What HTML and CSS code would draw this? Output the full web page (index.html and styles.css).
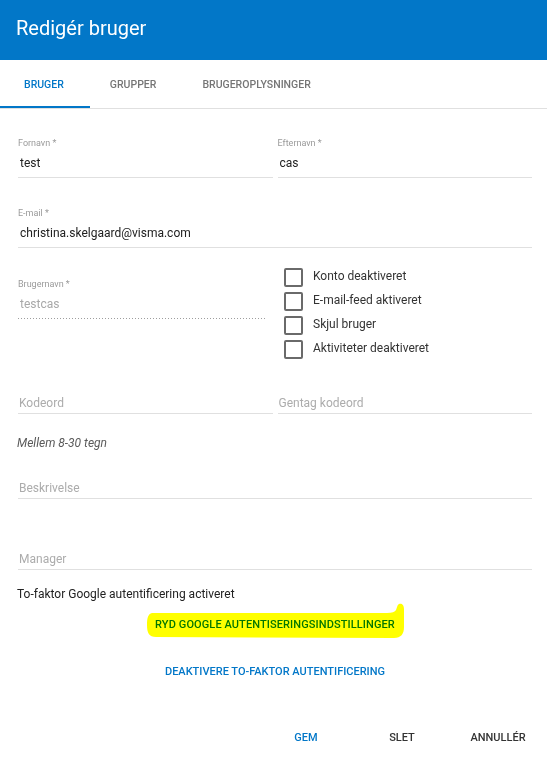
FILE: index.html
```html
<!DOCTYPE html>
<html lang="da">
<head>
<meta charset="utf-8">
<title>Redigér bruger</title>
<link rel="stylesheet" href="styles.css">
</head>
<body>
<div class="dialog">
  <div class="title-bar">Redigér bruger</div>
  <div class="tabs">
    <div class="tab active">BRUGER</div>
    <div class="tab">GRUPPER</div>
    <div class="tab">BRUGEROPLYSNINGER</div>
  </div>
  <div class="form">
    <div class="row row-name">
      <div class="field">
        <div class="field-label">Fornavn *</div>
        <div class="field-value">test</div>
      </div>
      <div class="field">
        <div class="field-label">Efternavn *</div>
        <div class="field-value">cas</div>
      </div>
    </div>
    <div class="row row-email">
      <div class="field">
        <div class="field-label">E-mail *</div>
        <div class="field-value">christina.skelgaard@visma.com</div>
      </div>
    </div>
    <div class="row row-user">
      <div class="col-left">
        <div class="field field-disabled">
          <div class="field-label">Brugernavn *</div>
          <div class="field-value muted">testcas</div>
        </div>
      </div>
      <div class="col-right">
        <div class="check"><span class="box"></span><span class="check-label">Konto deaktiveret</span></div>
        <div class="check"><span class="box"></span><span class="check-label">E-mail-feed aktiveret</span></div>
        <div class="check"><span class="box"></span><span class="check-label">Skjul bruger</span></div>
        <div class="check"><span class="box"></span><span class="check-label">Aktiviteter deaktiveret</span></div>
      </div>
    </div>
    <div class="row row-pass">
      <div class="field plain"><div class="placeholder">Kodeord</div></div>
      <div class="field plain"><div class="placeholder">Gentag kodeord</div></div>
    </div>
    <div class="hint">Mellem 8-30 tegn</div>
    <div class="row row-desc">
      <div class="field plain"><div class="placeholder">Beskrivelse</div></div>
    </div>
    <div class="row row-manager">
      <div class="field plain"><div class="placeholder">Manager</div></div>
    </div>
    <div class="twofa">To-faktor Google autentificering activeret</div>
    <div class="center-row row-clear">
      <span class="link-btn highlighted">RYD GOOGLE AUTENTISERINGSINDSTILLINGER
        <svg class="marker" width="258" height="36" viewBox="0 0 258 36" aria-hidden="true">
          <path d="M5 10 C1 11 0 15 0 22 C0 30 2 34 9 34 L247 35 C254 35 257 31 257 24 L257 6 C257 1 254 0 252 1 C250 2 250 5 249 7 C248 9 245 10 240 10 Z" fill="#ffff00"/>
        </svg>
      </span>
    </div>
    <div class="center-row row-deact">
      <span class="link-btn">DEAKTIVERE TO-FAKTOR AUTENTIFICERING</span>
    </div>
  </div>
  <div class="footer">
    <span class="btn primary">GEM</span>
    <span class="btn">SLET</span>
    <span class="btn">ANNULLÉR</span>
  </div>
</div>
</body>
</html>
```
FILE: styles.css
```css
* { box-sizing: border-box; }
html, body { margin: 0; padding: 0; background: #fff; }
body {
  font-family: Roboto, "Liberation Sans", Arial, sans-serif;
  color: #212121;
}
.dialog {
  width: 547px;
  height: 763px;
  display: flex;
  flex-direction: column;
  overflow: hidden;
}
.title-bar {
  height: 60px;
  background: #0277c8;
  color: #fff;
  font-size: 20px;
  line-height: 24px;
  padding: 16px 16px 0 16px;
}
.tabs {
  display: flex;
  height: 49px;
  border-bottom: 1px solid #e0e0e0;
}
.tab {
  padding: 0 23px;
  display: flex;
  align-items: center;
  font-size: 10.5px;
  font-weight: 500;
  color: #757575;
  position: relative;
}
.tab.active { color: #0277c8; padding-left: 24px; }
.tab.active::after {
  content: "";
  position: absolute;
  left: 0;
  right: -3px;
  bottom: 0;
  height: 2px;
  background: #0277c8;
}
.form {
  padding: 0 15px 0 18px;
}
.row { display: flex; gap: 5px; }
.field {
  flex: 1;
  border-bottom: 1px solid #e0e0e0;
}
.field-label {
  font-size: 9px;
  line-height: 12px;
  color: #9a9a9a;
}
.field-value {
  font-size: 12px;
  line-height: 20px;
  margin-top: 4px;
  padding-bottom: 4px;
  padding-left: 2px;
  color: #212121;
}
.field-value.muted { color: #a8a8a8; }
.row-name { margin-top: 28px; }
.row-email { margin-top: 29px; }
.row-user { margin-top: 17px; }
.col-left { flex: 1; padding-top: 13px; padding-right: 2px; }
.col-right { flex: 1; padding-left: 11px; }
.field-disabled {
  border-bottom: none;
  background-image: linear-gradient(to right, #9e9e9e 1px, transparent 1px);
  background-size: 3px 1px;
  background-repeat: repeat-x;
  background-position: left bottom;
  padding-bottom: 1px;
}
.check {
  height: 24px;
  display: flex;
  align-items: center;
}
.box {
  width: 19px;
  height: 19px;
  border: 2px solid #6a6a6a;
  border-radius: 2px;
  flex: none;
}
.check-label {
  margin-left: 10px;
  font-size: 12px;
  color: #333;
  position: relative;
  top: -1px;
}
.field.plain .placeholder {
  font-size: 12px;
  line-height: 20px;
  color: #acacac;
  padding-left: 1px;
}
.row-pass { margin-top: 32px; }
.hint {
  margin-top: 21px;
  margin-left: -1px;
  font-size: 12px;
  line-height: 16px;
  font-style: italic;
  color: #5a5a5a;
}
.row-desc { margin-top: 27px; }
.row-manager { margin-top: 50px; }
.twofa {
  margin-top: 16px;
  margin-left: -1px;
  font-size: 12px;
  line-height: 16px;
  color: #222;
}
.center-row {
  display: flex;
  justify-content: center;
}
.row-clear { margin-top: 15px; }
.row-deact { margin-top: 31px; }
.link-btn {
  font-size: 11px;
  font-weight: 500;
  line-height: 16px;
  color: #0277c8;
  position: relative;
}
.highlighted { letter-spacing: 0.1px; }
.marker {
  position: absolute;
  left: -8px;
  top: -14px;
  mix-blend-mode: multiply;
  pointer-events: none;
}
.footer {
  margin-top: 50px;
  display: flex;
  justify-content: flex-end;
  padding-right: 5px;
}
.btn {
  min-width: 88px;
  padding: 0 16px;
  margin-left: 8px;
  text-align: center;
  font-size: 11px;
  font-weight: 500;
  line-height: 16px;
  color: #333;
}
.btn.primary { color: #0277c8; }
```
